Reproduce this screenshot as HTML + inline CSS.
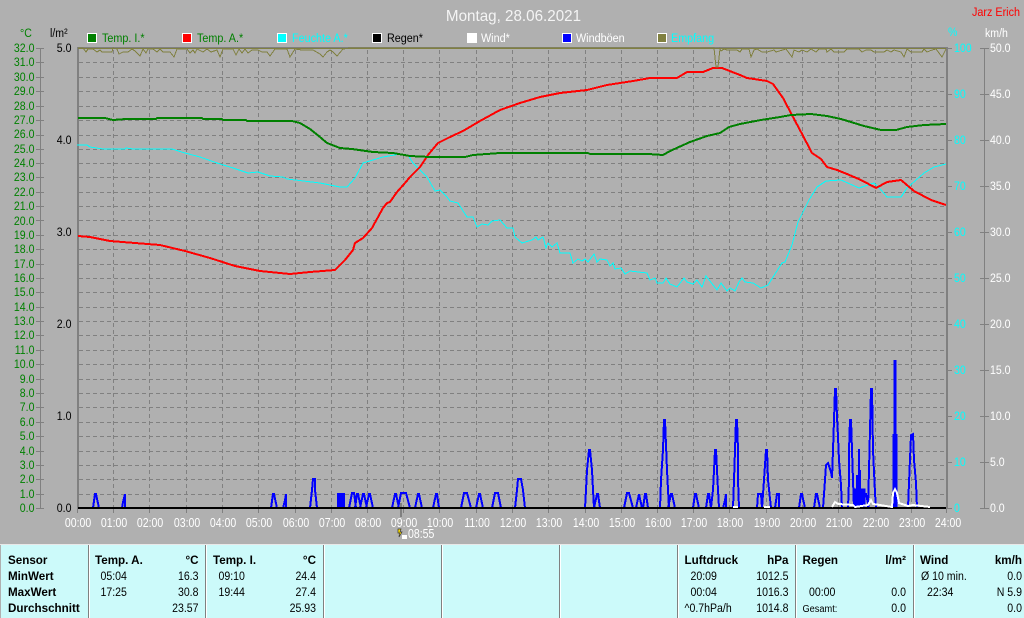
<!DOCTYPE html>
<html><head><meta charset="utf-8"><title>Montag, 28.06.2021</title>
<style>
html,body{margin:0;padding:0;background:#b0b0b0;overflow:hidden}
svg{display:block}
text{font:12px "Liberation Sans",sans-serif;transform-box:fill-box;transform:scaleX(.88)}
.s text,text.s{text-anchor:start;transform-origin:0 50%}
.e text,text.e{text-anchor:end;transform-origin:100% 50%}
.m text,text.m{text-anchor:middle;transform-origin:50% 50%}
.b text,text.b{font-weight:bold;transform:scaleX(.97)}
.t text{font-size:13px;transform:scaleX(.81)}
.l text{transform:scaleX(.9)}
.cr{shape-rendering:crispEdges;fill:none}
</style></head><body>
<svg xmlns="http://www.w3.org/2000/svg" width="1024" height="618" viewBox="0 0 1024 618">
<rect width="1024" height="618" fill="#b0b0b0"/>

<!-- grid -->
<path class="cr" stroke="#808080" stroke-width="1" stroke-dasharray="4 3" d="M79 62.5H946M79 77.5H946M79 91.5H946M79 106.5H946M79 120.5H946M79 135.5H946M79 149.5H946M79 163.5H946M79 177.5H946M79 192.5H946M79 206.5H946M79 220.5H946M79 235.5H946M79 249.5H946M79 264.5H946M79 278.5H946M79 292.5H946M79 307.5H946M79 321.5H946M79 335.5H946M79 350.5H946M79 364.5H946M79 379.5H946M79 393.5H946M79 407.5H946M79 422.5H946M79 436.5H946M79 451.5H946M79 465.5H946M79 479.5H946M79 494.5H946"/>
<path class="cr" stroke="#808080" stroke-width="1" stroke-dasharray="4 3" d="M113.5 50V508M149.5 50V508M186.5 50V508M222.5 50V508M258.5 50V508M295.5 50V508M331.5 50V508M367.5 50V508M403.5 50V508M439.5 50V508M476.5 50V508M512.5 50V508M548.5 50V508M585.5 50V508M621.5 50V508M657.5 50V508M693.5 50V508M729.5 50V508M766.5 50V508M802.5 50V508M838.5 50V508M875.5 50V508M911.5 50V508"/>

<!-- axes -->
<path class="cr" stroke="#808080" stroke-width="2" d="M78 47V509M947 47V509M77 48H948"/>
<path class="cr" stroke="#808080" stroke-width="1" d="M40.5 48V508M36 48.5H44M36 62.5H44M36 77.5H44M36 91.5H44M36 106.5H44M36 120.5H44M36 135.5H44M36 149.5H44M36 163.5H44M36 177.5H44M36 192.5H44M36 206.5H44M36 220.5H44M36 235.5H44M36 249.5H44M36 264.5H44M36 278.5H44M36 292.5H44M36 307.5H44M36 321.5H44M36 335.5H44M36 350.5H44M36 364.5H44M36 379.5H44M36 393.5H44M36 407.5H44M36 422.5H44M36 436.5H44M36 451.5H44M36 465.5H44M36 479.5H44M36 494.5H44M36 508.5H44"/>
<path class="cr" stroke="#808080" stroke-width="1" d="M984.5 48V508M980 48.5H989M980 94.5H989M980 140.5H989M980 186.5H989M980 232.5H989M980 278.5H989M980 324.5H989M980 370.5H989M980 416.5H989M980 462.5H989M980 508.5H989M948 48.5H952M948 94.5H952M948 140.5H952M948 186.5H952M948 232.5H952M948 278.5H952M948 324.5H952M948 370.5H952M948 416.5H952M948 462.5H952M948 508.5H952"/>
<path class="cr" stroke="#808080" stroke-width="1" d="M77.5 508V513M113.5 508V513M149.5 508V513M186.5 508V513M222.5 508V513M258.5 508V513M295.5 508V513M331.5 508V513M367.5 508V513M403.5 508V513M439.5 508V513M476.5 508V513M512.5 508V513M548.5 508V513M585.5 508V513M621.5 508V513M657.5 508V513M693.5 508V513M729.5 508V513M766.5 508V513M802.5 508V513M838.5 508V513M875.5 508V513M911.5 508V513M946.5 508V513"/>
<path class="cr" stroke="#808080" stroke-width="2" d="M401 503V517"/>

<!-- wind gusts -->
<path class="cr" stroke="#0000ff" stroke-width="2" d="M93 508 95 494 96 494 99 508M122 508 123 502 125 494 125 508M271 508 273 494 274 494 277 508M283 508 285 500 286 494 286 508M310 508 312 490 313 479 315 479 315 490 317 508M338 508V494H344V508M340 508V494M342 508V494M349 508 352 493 354 493 356 508M355 508 357 494 358 494 361 508M360 508 363 494 364 494 367 508M366 508 369 494 370 494 373 508M392 508 395 494 396 494 399 508M398 508 401 493 406 493 410 508M415 508 418 494 419 494 422 508M433 508 436 494 437 494 439 508M461 508 464 493 467 493 471 508M476 508 479 494 480 494 483 508M492 508 495 493 498 493 501 508M515 508 517 490 518 479 521 479 523 490 525 508M585 508 586 490 587 470 589 450 590 450 591 460 592 470 593 490 594 508M594 508 597 494 598 494 600 508M624 508 627 493 629 493 633 508M636 508 639 494 639 494 642 508M643 508 645 494 646 494 648 508M660 508 661 480 663 450 664 420 665 420 666 445 667 470 668 490 669 508M668 508 671 494 672 494 675 508M693 508 695 494 696 494 699 508M706 508 708 494 709 494 711 508M711 508 713 490 714 470 715 450 716 450 717 470 718 490 719 508M723 508 725 500 726 494 726 508M733 508 734 480 735 450 736 420 737 420 738 450 738 480 739 508M757 508 758 494 761 494 762 508M762 508 764 480 766 450 767 450 768 480 771 508M775 508 777 494 779 494 779 508M799 508 801 494 802 494 805 508M814 508 816 494 817 494 820 508M823 508 825 480 826 465 828 463 831 472 832 478 833 450 834 420 835 389 836 389 837 417 838 437 839 460 841 485 842 508M848 508 849 480 849 450 850 420 851 420 852 450 853 480 854 508M855 508V490M857 508V475M859 508V449M860 508V470M861 508V490M863 508V490M863 508 865 494 866 494 869 508M868 508 869 470 870 430 871 389 872 389 873 450 875 493 876 508M908 508 909 483 911 435 913 434 914 460 916 483 917 508"/>
<path class="cr" stroke="#0000ff" stroke-width="3" d="M855 508V490H864V508M858 508V490M861 508V490M895 434V360"/>
<path class="cr" stroke="#0000ff" stroke-width="5" d="M895 508V434"/>

<!-- baseline -->
<path class="cr" stroke="#000" stroke-width="2" d="M78 508H946"/>

<!-- wind -->
<path class="cr" stroke="#fff" stroke-width="2" d="M832 507 835 502 838 504 853 505 855 507 868 505 871 500 873 504 880 505 892 507 893 493 895 489 897 493 899 503 908 506 913 505 930 507M733 507H738M764 507H770"/>

<!-- humidity -->
<polyline class="cr" stroke="#00ffff" stroke-width="1" points="77,145 87,145 90,147 103,149 125,149 126,148 133,149 172,149 185,153 200,157 217,163 233,168 248,173 258,172 270,176 283,177 287,179 320,183 340,187 347,187 355,178 363,163 383,157 400,154 408,155 413,163 427,177 435,191 440,190 447,197 450,201 458,203 467,217 473,217 477,227 482,224 488,225 492,221 500,220 507,228 513,228 515,237 522,243 532,240 536,237 538,240 543,237 546,248 548,243 552,247 557,243 560,253 570,253 573,263 578,259 582,261 585,259 588,262 594,254 597,262 600,259 607,260 610,266 613,263 615,269 621,268 625,274 630,271 647,273 650,280 655,278 657,283 663,283 666,278 670,284 677,287 684,278 687,282 693,284 697,280 702,287 706,276 717,290 721,283 727,291 730,288 735,291 739,282 742,278 745,282 753,283 761,288 768,285 782,263 785,262 792,245 798,222 809,200 817,187 826,181 841,180 859,188 874,183 881,190 887,197 901,197 907,188 924,173 934,167 946,164"/>

<!-- outside temperature -->
<polyline class="cr" stroke="#ff0000" stroke-width="2" points="78,236 90,237 110,241 135,243 160,245 185,251 210,258 235,266 260,271 290,274 310,272 335,270 345,260 353,250 355,243 363,238 372,228 383,208 387,203 390,202 397,192 405,183 410,177 420,167 428,155 438,143 450,137 463,131 480,121 500,110 520,103 540,97 560,93 587,90 607,85 633,81 650,78 677,78 687,72 703,72 713,68 722,68 740,75 747,78 767,81 773,84 783,98 793,117 801,132 812,153 821,159 827,167 837,170 847,174 861,180 876,188 887,182 901,180 914,191 931,200 946,205"/>

<!-- inside temperature -->
<polyline class="cr" stroke="#008000" stroke-width="2" points="78,118 105,118 113,120 126,119 156,119 157,118 202,118 203,119 222,119 223,120 246,120 247,121 292,121 300,123 310,129 320,137 327,143 340,148 352,149 373,152 393,153 410,156 430,157 465,157 473,155 500,153 588,153 590,154 648,154 663,155 670,151 690,142 707,136 720,133 729,127 740,124 761,120 780,117 791,115 811,114 827,116 841,119 864,126 881,130 896,130 907,127 924,125 946,124"/>

<!-- reception -->
<polyline class="cr" stroke="#808040" stroke-width="1" points="78,48 83,48 86,52 88,49 93,49 97,52 100,50 102,52 112,52 113,48 117,49 119,54 123,52 128,52 132,49 135,51 140,56 143,49 146,53 148,49 153,49 157,52 160,49 163,52 170,52 174,57 177,49 187,49 190,53 193,50 195,53 197,49 203,52 207,49 211,52 217,50 220,57 223,49 233,49 236,55 239,49 242,53 245,49 248,53 252,50 258,50 262,52 267,52 270,56 275,49 287,49 290,57 295,49 302,50 313,50 320,54 323,57 327,52 330,50 333,52 337,56 343,49 350,48 714,48 716,67 718,67 720,49 721,51 724,49 727,50 737,50 740,52 742,49 749,49 751,57 754,50 757,49 762,52 767,52 774,50 776,52 786,49 792,57 794,50 799,52 802,50 807,52 811,49 816,52 819,49 826,49 827,52 831,49 834,52 844,52 847,49 859,49 862,52 866,50 871,50 874,52 884,52 887,50 891,52 894,50 901,52 904,57 907,49 911,52 922,52 924,49 927,52 932,50 936,49 942,57 946,49"/>
<path class="cr" stroke="#808040" stroke-width="1" d="M78 48.5H946"/>

<!-- title -->
<text class="m" x="513.5" y="21" fill="#f4f4f4" style="font-size:16px;transform:scaleX(.95)">Montag, 28.06.2021</text>
<text class="e" x="1020" y="16" fill="#ff0000" style="transform:scaleX(.9)">Jarz Erich</text>

<!-- legend -->
<g class="cr" stroke="#fff" stroke-width="1" style="shape-rendering:crispEdges">
<rect x="87.5" y="33.5" width="9" height="9" fill="#008000"/>
<rect x="182.5" y="33.5" width="9" height="9" fill="#ff0000"/>
<rect x="277.5" y="33.5" width="9" height="9" fill="#00ffff"/>
<rect x="372.5" y="33.5" width="9" height="9" fill="#000"/>
<rect x="467.5" y="33.5" width="9" height="9" fill="#fff"/>
<rect x="562.5" y="33.5" width="9" height="9" fill="#0000ff"/>
<rect x="657.5" y="33.5" width="9" height="9" fill="#808040"/>
</g>
<g class="s l">
<text x="102" y="42" fill="#008000">Temp. I.*</text>
<text x="197" y="42" fill="#008000">Temp. A.*</text>
<text x="292" y="42" fill="#00ffff">Feuchte A.*</text>
<text x="387" y="42" fill="#000">Regen*</text>
<text x="481" y="42" fill="#fff">Wind*</text>
<text x="576" y="42" fill="#fff">Windböen</text>
<text x="671" y="42" fill="#00ffff">Empfang</text>
</g>

<!-- unit headers -->
<g class="s">
<text x="20" y="37" fill="#008000">°C</text>
<text x="50" y="37" fill="#000">l/m²</text>
<text x="948" y="36" fill="#00ffff">%</text>
<text x="985" y="37" fill="#fff">km/h</text>
</g>

<!-- left axis °C -->
<g class="e" fill="#008000">
<text x="34.5" y="52">32.0</text><text x="34.5" y="66">31.0</text><text x="34.5" y="81">30.0</text><text x="34.5" y="95">29.0</text><text x="34.5" y="110">28.0</text><text x="34.5" y="124">27.0</text><text x="34.5" y="138">26.0</text><text x="34.5" y="153">25.0</text><text x="34.5" y="167">24.0</text><text x="34.5" y="181">23.0</text><text x="34.5" y="196">22.0</text><text x="34.5" y="210">21.0</text><text x="34.5" y="225">20.0</text><text x="34.5" y="239">19.0</text><text x="34.5" y="253">18.0</text><text x="34.5" y="268">17.0</text><text x="34.5" y="282">16.0</text><text x="34.5" y="296">15.0</text><text x="34.5" y="311">14.0</text><text x="34.5" y="325">13.0</text><text x="34.5" y="339">12.0</text><text x="34.5" y="354">11.0</text><text x="34.5" y="368">10.0</text><text x="34.5" y="383">9.0</text><text x="34.5" y="397">8.0</text><text x="34.5" y="411">7.0</text><text x="34.5" y="426">6.0</text><text x="34.5" y="440">5.0</text><text x="34.5" y="455">4.0</text><text x="34.5" y="469">3.0</text><text x="34.5" y="483">2.0</text><text x="34.5" y="498">1.0</text><text x="34.5" y="512">0.0</text>
</g>

<!-- rain axis -->
<g class="e" fill="#000">
<text x="71.5" y="52">5.0</text><text x="71.5" y="144">4.0</text><text x="71.5" y="236">3.0</text><text x="71.5" y="328">2.0</text><text x="71.5" y="420">1.0</text><text x="71.5" y="512">0.0</text>
</g>

<!-- humidity axis -->
<g class="s" fill="#00ffff">
<text x="954" y="52">100</text><text x="954" y="98">90</text><text x="954" y="144">80</text><text x="954" y="190">70</text><text x="954" y="236">60</text><text x="954" y="282">50</text><text x="954" y="328">40</text><text x="954" y="374">30</text><text x="954" y="420">20</text><text x="954" y="466">10</text><text x="954" y="512">0</text>
</g>

<!-- wind axis -->
<g class="s" fill="#fff">
<text x="990" y="52">50.0</text><text x="990" y="98">45.0</text><text x="990" y="144">40.0</text><text x="990" y="190">35.0</text><text x="990" y="236">30.0</text><text x="990" y="282">25.0</text><text x="990" y="328">20.0</text><text x="990" y="374">15.0</text><text x="990" y="420">10.0</text><text x="990" y="466">5.0</text><text x="990" y="512">0.0</text>
</g>

<!-- time axis -->
<g class="m t" fill="#fff">
<text x="78" y="527">00:00</text><text x="114" y="527">01:00</text><text x="150" y="527">02:00</text><text x="187" y="527">03:00</text><text x="223" y="527">04:00</text><text x="259" y="527">05:00</text><text x="296" y="527">06:00</text><text x="332" y="527">07:00</text><text x="368" y="527">08:00</text><text x="404" y="527">09:00</text><text x="440" y="527">10:00</text><text x="477" y="527">11:00</text><text x="513" y="527">12:00</text><text x="549" y="527">13:00</text><text x="586" y="527">14:00</text><text x="622" y="527">15:00</text><text x="658" y="527">16:00</text><text x="694" y="527">17:00</text><text x="730" y="527">18:00</text><text x="767" y="527">19:00</text><text x="803" y="527">20:00</text><text x="839" y="527">21:00</text><text x="876" y="527">22:00</text><text x="912" y="527">23:00</text><text x="948" y="527">24:00</text>
</g>

<!-- marker -->
<path d="M398 529H401L400 532H402L399 537 399.5 533H398Z" fill="#ffe000" stroke="#333" stroke-width=".7"/>
<rect x="402" y="535" width="5" height="4" fill="#fff"/>
<g class="s t"><text x="408" y="538" fill="#fff">08:55</text></g>

<!-- panel -->
<rect x="0" y="544" width="1024" height="1" fill="#e8e8e8"/>
<rect x="1" y="545" width="1023" height="73" fill="#ccfafa"/>
<path class="cr" stroke="#808080" stroke-width="1" d="M88.5 545V618M205.5 545V618M323.5 545V618M441.5 545V618M559.5 545V618M677.5 545V618M795.5 545V618M913.5 545V618"/>
<path class="cr" stroke="#ffffff" stroke-width="1" d="M89.5 545V618M206.5 545V618M324.5 545V618M442.5 545V618M560.5 545V618M678.5 545V618M796.5 545V618M914.5 545V618"/>

<g class="s b" fill="#000">
<text x="8" y="564">Sensor</text><text x="8" y="580">MinWert</text><text x="8" y="596">MaxWert</text><text x="8" y="612">Durchschnitt</text>
<text x="95" y="564">Temp. A.</text><text x="213" y="564">Temp. I.</text>
<text x="684.5" y="564">Luftdruck</text><text x="802.5" y="564">Regen</text><text x="920" y="564">Wind</text>
</g>
<g class="e b" fill="#000">
<text x="198.5" y="564">°C</text><text x="316" y="564">°C</text><text x="788.5" y="564">hPa</text><text x="906" y="564">l/m²</text><text x="1022" y="564">km/h</text>
</g>
<g class="s" fill="#000">
<text x="100.5" y="580">05:04</text><text x="100.5" y="596">17:25</text>
<text x="218.5" y="580">09:10</text><text x="218.5" y="596">19:44</text>
<text x="690.5" y="580">20:09</text><text x="690.5" y="596">00:04</text><text x="684.5" y="612">^0.7hPa/h</text>
<text x="809" y="596">00:00</text><text x="802.5" y="612" style="font-size:10.5px">Gesamt:</text>
<text x="921" y="580">Ø 10 min.</text><text x="927" y="596">22:34</text>
</g>
<g class="e" fill="#000">
<text x="198.5" y="580">16.3</text><text x="198.5" y="596">30.8</text><text x="198.5" y="612">23.57</text>
<text x="316" y="580">24.4</text><text x="316" y="596">27.4</text><text x="316" y="612">25.93</text>
<text x="788.5" y="580">1012.5</text><text x="788.5" y="596">1016.3</text><text x="788.5" y="612">1014.8</text>
<text x="906" y="596">0.0</text><text x="906" y="612">0.0</text>
<text x="1022" y="580">0.0</text><text x="1022" y="596">N 5.9</text><text x="1022" y="612">0.0</text>
</g>
</svg>
</body></html>
